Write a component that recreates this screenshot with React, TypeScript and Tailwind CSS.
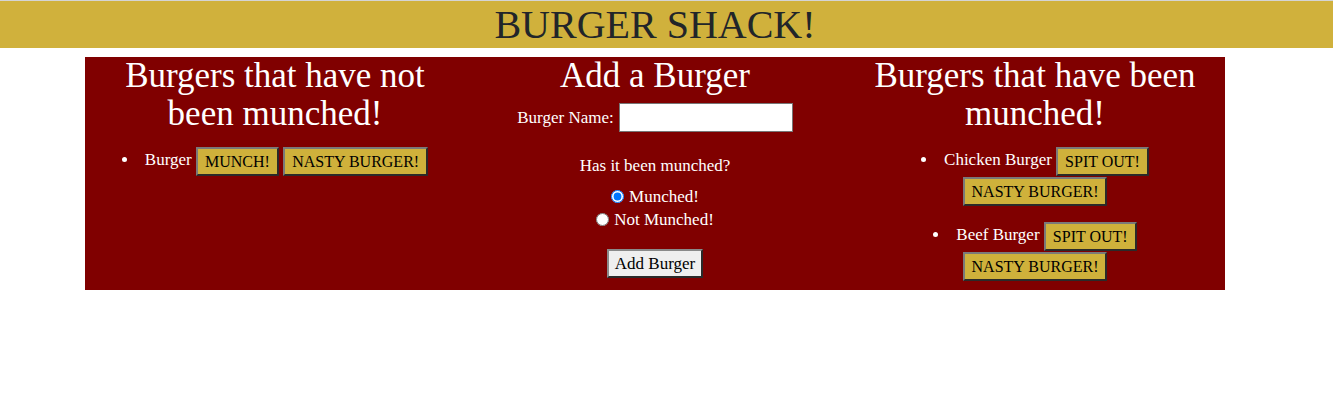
import React from 'react';

const btnYellow =
  'inline-block align-middle bg-[#cfb13b] text-black text-[16px] leading-[23px] px-[7px] py-[1px] border-2 border-t-[#7a7a7a] border-l-[#7a7a7a] border-b-[#2a2a2a] border-r-[#2a2a2a]';

interface BurgerItemProps {
  name: string;
  action: string;
}

function BurgerItem({ name, action }: BurgerItemProps) {
  return (
    <li className="list-inside list-disc leading-[30px] mb-[14px] last:mb-0">
      {name}{' '}
      <button className={btnYellow}>{action}</button>{' '}
      <button className={btnYellow}>NASTY BURGER!</button>
    </li>
  );
}

export default function App() {
  return (
    <div className="font-['Liberation_Serif','Times_New_Roman',serif] bg-white min-h-[411px]">
      <header className="border-t border-[#d4d4d4] bg-[#d0b13c] h-[48px] text-[#212529]">
        <h1 className="w-[1140px] ml-[85px] text-center text-[40px] leading-[47px] font-normal">BURGER SHACK!</h1>
      </header>

      <div className="mt-[9px] ml-[85px] w-[1140px] bg-[#800000] text-white grid grid-cols-3 items-start text-[17px] text-center">
        <div className="px-[15px]">
          <h2 className="text-[35px] leading-[38px] font-normal mb-[8px]">Burgers that have not been munched!</h2>
          <ul className="pt-[4px] px-[10px]">
            <BurgerItem name="Burger" action="MUNCH!" />
          </ul>
        </div>

        <div className="px-[15px] pb-[12px]">
          <h2 className="text-[35px] leading-[38px] font-normal mb-[8px]">Add a Burger</h2>
          <form onSubmit={(e) => e.preventDefault()}>
            <div className="flex items-center justify-center gap-[5px] h-[29px]">
              <label htmlFor="burger-name">Burger Name:</label>
              <input
                id="burger-name"
                type="text"
                className="w-[174px] h-[29px] bg-white border border-[#767676] text-black"
              />
            </div>
            <p className="mt-[22px] leading-[24px]">Has it been munched?</p>
            <div className="mt-[7px]">
              <label className="flex items-center justify-center gap-[5px] h-[23px]">
                <input type="radio" name="munched" defaultChecked className="m-0 w-[13px] h-[13px]" />
                Munched!
              </label>
              <label className="flex items-center justify-center gap-[5px] h-[23px]">
                <input type="radio" name="munched" className="m-0 w-[13px] h-[13px]" />
                Not Munched!
              </label>
            </div>
            <button
              type="submit"
              className="mt-[18px] bg-[#efefef] text-black text-[17px] leading-[23px] px-[6px] py-[1px] border-2 border-t-[#8a8a8a] border-l-[#8a8a8a] border-b-[#2a2a2a] border-r-[#2a2a2a]"
            >
              Add Burger
            </button>
          </form>
        </div>

        <div className="px-[15px]">
          <h2 className="text-[35px] leading-[38px] font-normal mb-[8px]">Burgers that have been munched!</h2>
          <ul className="pt-[4px] px-[12px]">
            <BurgerItem name="Chicken Burger" action="SPIT OUT!" />
            <BurgerItem name="Beef Burger" action="SPIT OUT!" />
          </ul>
        </div>
      </div>
    </div>
  );
}
